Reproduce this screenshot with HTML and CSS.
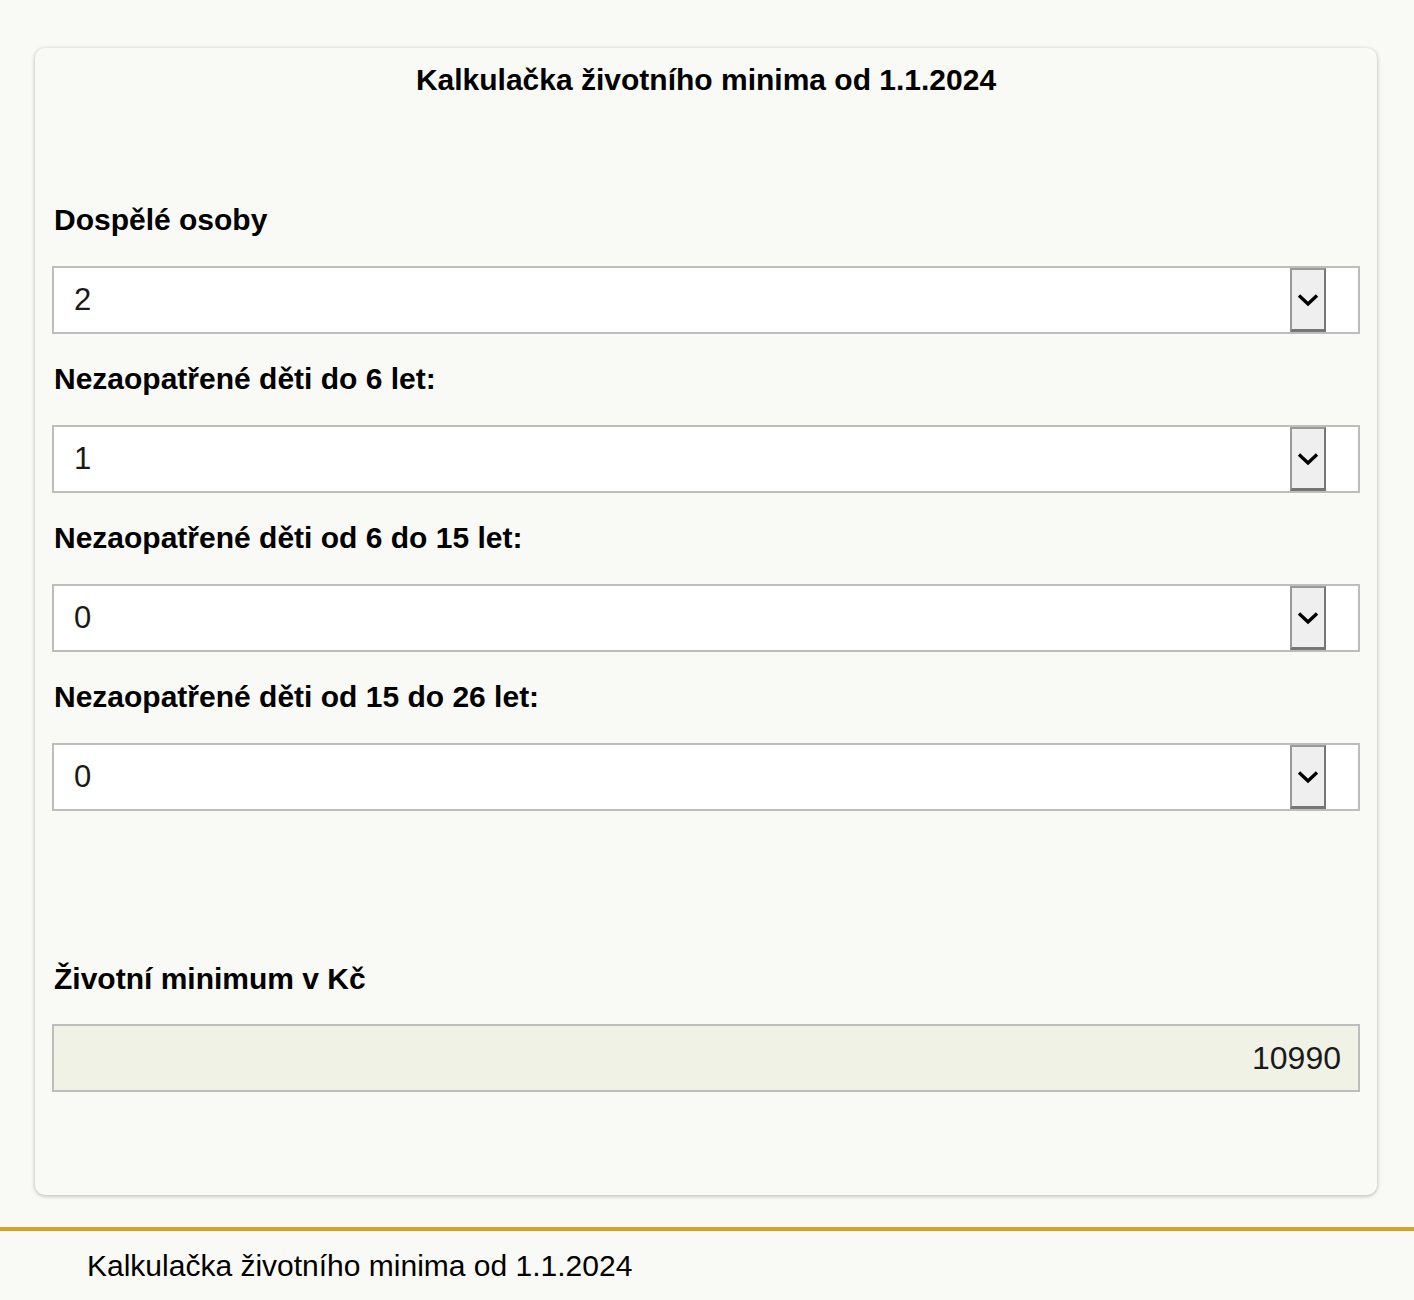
FILE: index.html
```html
<!DOCTYPE html>
<html lang="cs">
<head>
<meta charset="utf-8">
<title>Kalkulačka životního minima od 1.1.2024</title>
<link rel="stylesheet" href="styles.css">
</head>
<body>
<main class="card">
  <h1 class="title">Kalkulačka životního minima od 1.1.2024</h1>
  <div class="fields">
    <div class="field">
      <div class="label">Dospělé osoby</div>
      <div class="select">
        <span class="value">2</span>
        <span class="btn"><svg viewBox="0 0 24 14" width="24" height="14"><path d="M3 2.5 L12 11 L21 2.5" fill="none" stroke="#000" stroke-width="3.4"/></svg></span>
        <span class="pad"></span>
      </div>
    </div>
    <div class="field">
      <div class="label">Nezaopatřené děti do 6 let:</div>
      <div class="select">
        <span class="value">1</span>
        <span class="btn"><svg viewBox="0 0 24 14" width="24" height="14"><path d="M3 2.5 L12 11 L21 2.5" fill="none" stroke="#000" stroke-width="3.4"/></svg></span>
        <span class="pad"></span>
      </div>
    </div>
    <div class="field">
      <div class="label">Nezaopatřené děti od 6 do 15 let:</div>
      <div class="select">
        <span class="value">0</span>
        <span class="btn"><svg viewBox="0 0 24 14" width="24" height="14"><path d="M3 2.5 L12 11 L21 2.5" fill="none" stroke="#000" stroke-width="3.4"/></svg></span>
        <span class="pad"></span>
      </div>
    </div>
    <div class="field">
      <div class="label">Nezaopatřené děti od 15 do 26 let:</div>
      <div class="select">
        <span class="value">0</span>
        <span class="btn"><svg viewBox="0 0 24 14" width="24" height="14"><path d="M3 2.5 L12 11 L21 2.5" fill="none" stroke="#000" stroke-width="3.4"/></svg></span>
        <span class="pad"></span>
      </div>
    </div>
  </div>
  <div class="result">
    <div class="label result-label">Životní minimum v Kč</div>
    <div class="output">10990</div>
  </div>
</main>
<footer class="footer">Kalkulačka životního minima od 1.1.2024</footer>
</body>
</html>
```
FILE: styles.css
```css
html, body {
  margin: 0;
  padding: 0;
}
body {
  background: #f9f9f5;
  font-family: "Liberation Sans", Arial, sans-serif;
  color: #000;
}
.card {
  margin: 48px 0 0 35px;
  width: 1342px;
  box-sizing: border-box;
  padding: 14px 17px 103px;
  border-radius: 10px;
  background: #f9f9f5;
  box-shadow: 0 1px 4px rgba(0, 0, 0, 0.28);
}
.title {
  margin: 0 0 104px;
  font-size: 30px;
  line-height: 36px;
  font-weight: bold;
  text-align: center;
}
.label {
  font-size: 30px;
  line-height: 36px;
  font-weight: bold;
  margin-bottom: 28px;
  padding-left: 2px;
}
.result-label {
  margin-bottom: 27px;
}
.field {
  margin-bottom: 27px;
}
.select {
  display: flex;
  height: 68px;
  box-sizing: border-box;
  border: 2px solid #bdbdbd;
  background: #fff;
}
.value {
  flex: 1;
  font-size: 31px;
  line-height: 64px;
  padding-left: 20px;
  color: #1a1a1a;
}
.btn {
  width: 36px;
  box-sizing: border-box;
  background: #efefef;
  border-top: 2px solid #9a9a9a;
  border-left: 2px solid #9a9a9a;
  border-right: 2px solid #767676;
  border-bottom: 3px solid #767676;
  display: flex;
  align-items: center;
  justify-content: center;
}
.pad {
  width: 32px;
}
.result {
  margin-top: 150px;
}
.output {
  height: 68px;
  box-sizing: border-box;
  border: 2px solid #bdbdbd;
  background: #f1f2e6;
  text-align: right;
  padding-right: 17px;
  font-size: 32px;
  line-height: 64px;
  color: #1a1a1a;
}
.footer {
  margin-top: 32px;
  border-top: 4px solid #d6a229;
  padding: 17px 0 16px 87px;
  font-size: 30px;
  line-height: 36px;
  color: #000;
}
```
